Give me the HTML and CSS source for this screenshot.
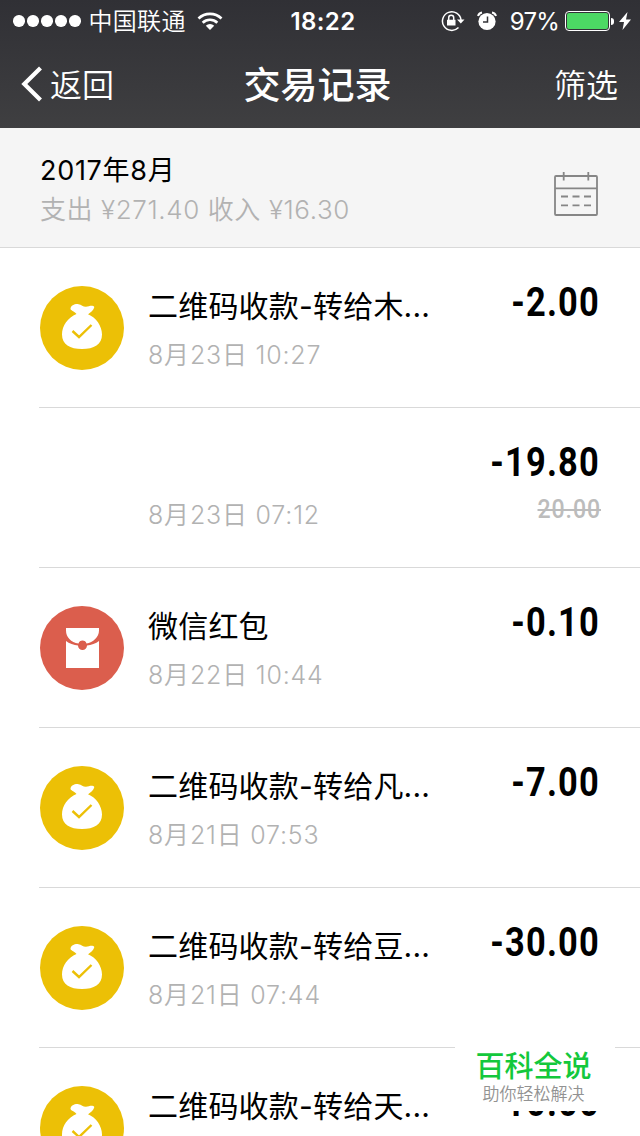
FILE: index.html
```html
<!DOCTYPE html>
<html lang="zh-CN">
<head>
<meta charset="utf-8">
<title>交易记录</title>
<link rel="stylesheet" href="styles.css">
</head>
<body>
<svg class="defs" width="0" height="0" aria-hidden="true">
  <symbol id="bag" viewBox="0 0 84 84">
    <circle cx="42" cy="42" r="42" fill="#ecc006"/>
    <path fill="#fff" d="M36.500 28C34.500 25 30 24.500 30.500 22.500C31 19.500 35 17.600 38.500 18.200C41.500 18.700 43 20.800 46 20.700C49 20.500 52.500 18.700 54.300 21C53.500 24.500 50 27 48 28.300C56 31.500 62 40 62 48.500C62 58.500 54 63 42 63C30 63 22 58.500 22 48.500C22 39.500 28 31.500 36.500 28Z"/>
    <path fill="none" stroke="#ecc006" stroke-width="2.400" d="M32.500 45L39 51L51.500 39"/>
  </symbol>
  <symbol id="packet" viewBox="0 0 84 84">
    <circle cx="42" cy="42" r="42" fill="#db5e4d"/>
    <path fill="#fff" d="M26 22H59V24.500C59 31 53 36.500 46.500 37.500A4.200 4.200 0 0 0 38.500 37.500C31 36.500 26 31 26 24.500Z"/>
    <path fill="#fff" d="M26 35C29 37.500 34 39.300 38 39.500A4.500 4.500 0 0 0 47 39.500C51 39.300 56 37.500 59 35V62H26Z"/>
    <circle cx="42.500" cy="38.500" r="3.400" fill="#db5e4d"/>
  </symbol>
</svg>
<div class="screen">
  <header class="top">
    <div class="status">
      <div class="carrier">
        <span class="dots"><i></i><i></i><i></i><i></i><i></i></span>
        <span class="operator">中国联通</span>
        <svg class="wifi" width="26" height="20" viewBox="0 0 26 20"><g fill="none" stroke="#fff" stroke-width="2.700"><path d="M1.500 7.500A16.500 16.500 0 0 1 24.500 7.500"/><path d="M5.700 11.700A10.500 10.500 0 0 1 20.300 11.700"/></g><path fill="#fff" d="M8.800 14.800A6 6 0 0 1 17.200 14.800L13 19Z"/></svg>
      </div>
      <span class="clock">18:22</span>
      <div class="indicators">
        <svg width="24" height="22" viewBox="0 0 24 22"><path fill="none" stroke="#fff" stroke-width="1.500" d="M17.500 17.500A9.300 9.300 0 1 1 20 10"/><path fill="#fff" d="M16 9.500H23.500L19.800 13.500ZM6 9.800H14.500V15.500H6Z"/><path fill="none" stroke="#fff" stroke-width="1.500" d="M7.700 10V7.700A2.500 2.500 0 0 1 12.700 7.700V10"/></svg>
        <svg class="alarm" width="20" height="20" viewBox="0 0 20 20"><circle cx="10" cy="10.500" r="8.600" fill="#fff"/><path fill="none" stroke="#fff" stroke-width="2" d="M1 5Q2 2 5 1.500M15 1.500Q18 2 19 5"/><path fill="none" stroke="#343438" stroke-width="1.500" d="M10.500 5.500V11H6"/></svg>
        <span class="percent">97%</span>
        <span class="battery"><i></i></span><span class="cap"></span>
        <svg class="bolt" width="12" height="18" viewBox="0 0 12 18"><path fill="#fff" d="M8.500 0L0 10H5L3.500 18L12 7.500H7Z"/></svg>
      </div>
    </div>
    <nav class="nav">
      <a class="back"><svg width="22" height="36" viewBox="0 0 22 36"><path fill="none" stroke="#fff" stroke-width="4.200" d="M19.500 2L3.300 18L19.500 34"/></svg><span>返回</span></a>
      <h1 class="title">交易记录</h1>
      <a class="filter">筛选</a>
    </nav>
  </header>
  <section class="summary">
    <div>
      <div class="month">2017年8月</div>
      <div class="totals">支出 ¥271.40 收入 ¥16.30</div>
    </div>
    <svg class="calendar" width="46" height="46" viewBox="0 0 46 46"><g fill="none" stroke="#868686" stroke-width="1.800"><rect x="2" y="5" width="42" height="39" rx="1"/><path d="M2 17.300H44M10.700 1V9.500M35.300 1V9.500M8 25.500H15M19.500 25.500H26.500M31 25.500H38M8 34.300H15M19.500 34.300H26.500M31 34.300H38"/></g></svg>
  </section>
  <main class="list">
    <article class="row"><svg class="icon"><use href="#bag"/></svg><div class="info"><div class="name">二维码收款-转给木...</div><div class="date">8月23日 10:27</div></div><div class="money"><div class="amount">-2.00</div></div></article>
    <article class="row"><span class="icon"></span><div class="info"><div class="name"></div><div class="date">8月23日 07:12</div></div><div class="money"><div class="amount">-19.80</div><div class="original">20.00</div></div></article>
    <article class="row"><svg class="icon"><use href="#packet"/></svg><div class="info"><div class="name">微信红包</div><div class="date">8月22日 10:44</div></div><div class="money"><div class="amount">-0.10</div></div></article>
    <article class="row"><svg class="icon"><use href="#bag"/></svg><div class="info"><div class="name">二维码收款-转给凡...</div><div class="date">8月21日 07:53</div></div><div class="money"><div class="amount">-7.00</div></div></article>
    <article class="row"><svg class="icon"><use href="#bag"/></svg><div class="info"><div class="name">二维码收款-转给豆...</div><div class="date">8月21日 07:44</div></div><div class="money"><div class="amount">-30.00</div></div></article>
    <article class="row"><svg class="icon"><use href="#bag"/></svg><div class="info"><div class="name">二维码收款-转给天...</div></div><div class="money"><div class="amount">-10.00</div></div></article>
  </main>
  <aside class="watermark"><div class="brand">百科全说</div><div class="slogan">助你轻松解决</div></aside>
</div>
</body>
</html>
```
FILE: styles.css
```css
* { box-sizing: border-box; }
body { margin: 0; background: #fff; font-family: Inter, "Noto Sans CJK SC", sans-serif; }
.defs { position: absolute; }
.screen { position: relative; width: 640px; height: 1136px; overflow: hidden; }

.top { height: 128px; background: linear-gradient(#303035, #3f3f41); color: #fff; }
.status { display: grid; grid-template-columns: 1fr auto 1fr; height: 40px; padding: 0 9px 0 13px; align-items: center; }
.carrier, .indicators { display: flex; align-items: center; }
.dots { display: flex; gap: 2.500px; }
.dots i { width: 11.500px; height: 11.500px; border-radius: 50%; background: #fff; }
.operator { margin-left: 8px; padding-top: 2px; font-size: 24px; line-height: 38px; font-weight: 350; letter-spacing: .3px; }
.wifi { margin-left: 11px; }
.clock { padding-top: 2px; font-size: 24px; line-height: 40px; font-weight: 600; letter-spacing: .4px; margin-left: 2px; }
.indicators { justify-content: flex-end; }
.alarm { margin-left: 12px; }
.percent { padding-top: 2px; margin-left: 13px; font-size: 24px; line-height: 40px; letter-spacing: -.8px; }
.battery { width: 45px; height: 20px; margin-left: 6px; padding: 1px; border: 1.500px solid #fff; border-radius: 4px; }
.battery i { display: block; height: 100%; border-radius: 2px; background: #4cd964; }
.cap { width: 3px; height: 7px; margin-left: 1px; border-radius: 0 3px 3px 0; background: #fff; }
.bolt { margin-left: 5px; }
.nav { display: grid; grid-template-columns: 1fr auto 1fr; height: 88px; padding: 0 22px 0 21px; align-items: center; }
.nav span, .title, .filter { padding-top: 4px; line-height: 84px; }
.back { display: flex; align-items: center; gap: 7px; font-size: 32px; font-weight: 350; }
.title { margin: 0 4px 0 0; font-size: 37px; font-weight: 500; }
.filter { text-align: right; font-size: 32px; font-weight: 350; }

.summary { display: flex; justify-content: space-between; height: 120px; padding: 23px 41px 0 40px; background: #f5f5f5; border-bottom: 1px solid #d9d9d9; }
.month { font-size: 27px; line-height: 40px; letter-spacing: .7px; color: #000; }
.totals { font-size: 26px; line-height: 38px; letter-spacing: .6px; color: #b2b2b2; font-weight: 350; white-space: nowrap; }
.calendar { margin-top: 20px; }

.row { display: flex; width: 601px; height: 160px; margin-left: 39px; padding-left: 1px; border-bottom: 1px solid #d9d9d9; }
.icon { flex: none; width: 84px; height: 84px; margin-top: 38px; }
.info { flex: 1; margin-left: 24px; padding-top: 38px; white-space: nowrap; }
.name { height: 40px; font-size: 30px; line-height: 40px; letter-spacing: .2px; font-weight: 400; color: #000; }
.date { margin-top: 9px; font-size: 25px; line-height: 40px; letter-spacing: .8px; font-weight: 350; color: #b2b2b2; }
.money { flex: none; width: 150px; padding: 34px 41px 0 0; }
.amount { display: flex; justify-content: flex-end; margin-right: -1px; font: 700 40px/42px Roboto, sans-serif; letter-spacing: 1.400px; transform: scaleX(.86); transform-origin: right; }
.original { margin-top: 12px; margin-right: -2px; text-align: right; font: 500 26px/26px Roboto, sans-serif; letter-spacing: 1px; color: #bcbcbc; text-decoration: line-through; transform: scaleX(.89); transform-origin: right; }

.watermark { position: absolute; left: 455px; top: 1042px; width: 160px; height: 69px; padding: 8px 3px 0 0; background: #fff; text-align: center; }
.brand { font-size: 29px; line-height: 34px; font-weight: 500; color: #13c83c; }
.slogan { font-size: 17px; line-height: 20px; color: #929292; font-weight: 350; }
```
